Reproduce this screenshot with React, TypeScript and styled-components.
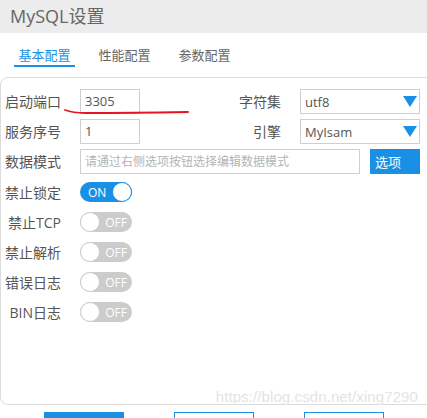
import React from 'react';
import styled, { createGlobalStyle } from 'styled-components';

const GlobalStyle = createGlobalStyle`
    html, body {
        margin: 0;
        padding: 0;
        background: #fff;
        overflow: hidden;
    }
    body {
        width: 427px;
        height: 418px;
        font-family: "Open Sans", "Noto Sans CJK SC", sans-serif;
        color: #555;
    }
`;

const Page = styled.div`
    position: relative;
    width: 427px;
    height: 418px;
    overflow: hidden;
`;

const Header = styled.header`
    height: 33px;
    line-height: 33px;
    background: #ececec;
    padding-left: 10px;
    font-size: 18px;
    color: #666;
`;

const TabBar = styled.nav`
    display: flex;
    gap: 19px;
    padding: 13px 0 0 14px;
`;

const Tab = styled.div<{ $active?: boolean }>`
    width: 61px;
    text-align: center;
    font-size: 13px;
    line-height: 19px;
    color: ${p => (p.$active ? '#1a90e4' : '#666')};
    border-bottom: 2px solid ${p => (p.$active ? '#1a90e4' : 'transparent')};
`;

const Panel = styled.section`
    position: relative;
    margin-top: 10px;
    width: 440px;
    height: 328px;
    box-sizing: border-box;
    border: 1px solid #dcdcdc;
    border-radius: 8px;
    padding: 11px 0 0 4px;
    display: flex;
    flex-direction: column;
    gap: 5px;
`;

// two label/field pairs on one line
const PairRow = styled.div`
    display: grid;
    grid-template-columns: 56px 60px 122px 120px;
    column-gap: 19px;
    align-items: center;
    height: 25px;
`;

const Label = styled.label`
    font-size: 14px;
    line-height: 25px;
    color: #555;
    white-space: nowrap;
    text-align: right;
`;

const TextBox = styled.div<{ $width?: number; $placeholder?: boolean }>`
    box-sizing: border-box;
    width: ${p => (p.$width ? `${p.$width}px` : '100%')};
    height: 25px;
    border: 1px solid #cfcfcf;
    padding-left: 4px;
    font-size: ${p => (p.$placeholder ? '12px' : '13px')};
    line-height: 23px;
    color: ${p => (p.$placeholder ? '#b5b5b5' : '#555')};
    white-space: nowrap;
    overflow: hidden;
`;

const Select = styled.div`
    box-sizing: border-box;
    height: 25px;
    border: 1px solid #cfcfcf;
    padding: 0 2px 0 4px;
    display: flex;
    align-items: center;
    justify-content: space-between;
    font-size: 13px;
    color: #555;
`;

const Caret = styled.span`
    width: 0;
    height: 0;
    border-left: 7px solid transparent;
    border-right: 7px solid transparent;
    border-top: 11px solid #1a90e4;
`;

const ModeRow = styled.div`
    display: flex;
    align-items: center;
    height: 25px;
`;

const ModeLabel = styled(Label)`
    width: 56px;
    margin-right: 19px;
`;

const OptionButton = styled.button`
    margin-left: 10px;
    width: 50px;
    height: 25px;
    border: none;
    background: #1a90e4;
    color: #fff;
    font-family: inherit;
    font-size: 13px;
    text-align: left;
    padding: 0 0 0 5px;
`;

const Switches = styled.div`
    display: flex;
    flex-direction: column;
    gap: 10px;
    margin-top: 3px;
`;

const SwitchRow = styled.div`
    display: flex;
    align-items: center;
    height: 20px;
`;

const Toggle = styled.div<{ $on?: boolean }>`
    box-sizing: border-box;
    width: 52px;
    height: 20px;
    border-radius: 10px;
    background: ${p => (p.$on ? '#1a90e4' : '#cccccc')};
    display: flex;
    flex-direction: ${p => (p.$on ? 'row' : 'row-reverse')};
    align-items: center;
    justify-content: space-between;
    font-size: 12px;
    color: #fff;
    padding-left: ${p => (p.$on ? '8px' : '0')};
    padding-right: ${p => (p.$on ? '0' : '5px')};
`;

const Knob = styled.span<{ $on?: boolean }>`
    box-sizing: border-box;
    width: 20px;
    height: 20px;
    border-radius: 50%;
    background: #fff;
    border: 1px solid ${p => (p.$on ? '#1a90e4' : '#cccccc')};
`;

const Watermark = styled.span`
    position: absolute;
    right: 21px;
    bottom: -1px;
    font-family: "Liberation Sans", Arial, sans-serif;
    font-size: 15px;
    color: #e4e4e4;
    letter-spacing: 0.1px;
`;

// red hand-drawn mark under the port row
const Scribble = styled.svg`
    position: absolute;
    left: 64px;
    top: 107px;
`;

const Footer = styled.div`
    display: flex;
    gap: 50px;
    padding-left: 44px;
    margin-top: 7px;
`;

const FooterButton = styled.div<{ $primary?: boolean }>`
    box-sizing: border-box;
    width: 80px;
    height: 30px;
    background: ${p => (p.$primary ? '#1a90e4' : '#fff')};
    border: 1px solid #1a90e4;
`;

const switches = [
    { label: '禁止锁定', on: true },
    { label: '禁止TCP', on: false },
    { label: '禁止解析', on: false },
    { label: '错误日志', on: false },
    { label: 'BIN日志', on: false },
];

export default function App() {
    return (
        <Page>
            <GlobalStyle />
            <Header>MySQL设置</Header>
            <TabBar>
                <Tab $active>基本配置</Tab>
                <Tab>性能配置</Tab>
                <Tab>参数配置</Tab>
            </TabBar>
            <Panel>
                <PairRow>
                    <Label>启动端口</Label>
                    <TextBox>3305</TextBox>
                    <Label>字符集</Label>
                    <Select>utf8<Caret /></Select>
                </PairRow>
                <PairRow>
                    <Label>服务序号</Label>
                    <TextBox>1</TextBox>
                    <Label>引擎</Label>
                    <Select>MyIsam<Caret /></Select>
                </PairRow>
                <ModeRow>
                    <ModeLabel>数据模式</ModeLabel>
                    <TextBox $width={280} $placeholder>请通过右侧选项按钮选择编辑数据模式</TextBox>
                    <OptionButton>选项</OptionButton>
                </ModeRow>
                <Switches>
                    {switches.map(s => (
                        <SwitchRow key={s.label}>
                            <ModeLabel>{s.label}</ModeLabel>
                            <Toggle $on={s.on}>
                                {s.on ? 'ON' : 'OFF'}
                                <Knob $on={s.on} />
                            </Toggle>
                        </SwitchRow>
                    ))}
                </Switches>
                <Watermark>https://blog.csdn.net/xing7290</Watermark>
            </Panel>
            <Footer>
                <FooterButton $primary />
                <FooterButton />
                <FooterButton />
            </Footer>
            <Scribble width="126" height="10" viewBox="0 0 126 10">
                <path d="M1 3 C 6 5, 12 6, 22 6 C 55 6, 95 5.5, 124 5" fill="none" stroke="#e8141b" strokeWidth="1.8" strokeLinecap="round" />
            </Scribble>
        </Page>
    );
}
